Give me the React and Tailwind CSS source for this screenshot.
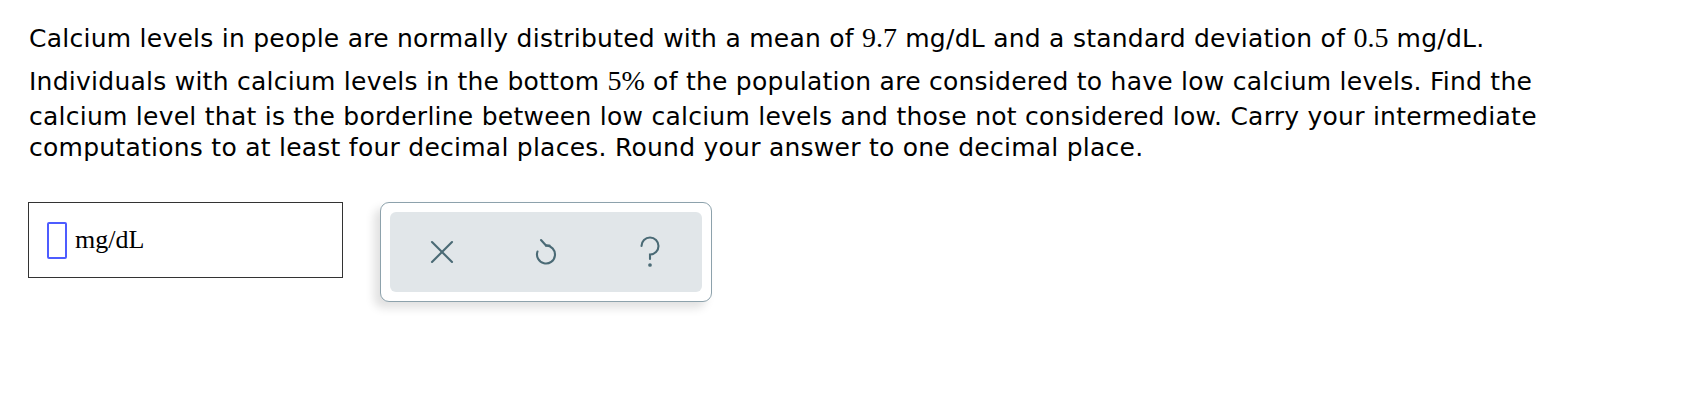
const sans = { fontFamily: '"DejaVu Sans", Verdana, sans-serif' };

function M({ children }) {
  // inline math numbers rendered in a serif face, like MathJax
  return (
    <span className="text-[28px] leading-[40px] tracking-normal font-['Liberation_Serif',serif]">{children}</span>
  );
}

function CloseIcon() {
  return (
    <svg width="24" height="24" viewBox="0 0 24 24" fill="none" stroke="currentColor" strokeWidth="2.1" strokeLinecap="round">
      <path d="M2 2 L22 22" />
      <path d="M22 2 L2 22" />
    </svg>
  );
}

function UndoIcon() {
  return (
    <svg width="24" height="30" viewBox="0 0 24 30" fill="none" stroke="currentColor" strokeWidth="2.1" strokeLinecap="round" strokeLinejoin="round">
      <path d="M12 8.5 A9 9 0 1 1 3.5 14.5" />
      <path d="M12 8.5 L7 3" />
      <path d="M12 8.5 L15.5 8.5" />
    </svg>
  );
}

function HelpIcon() {
  return (
    <svg width="24" height="32" viewBox="0 0 24 32" fill="none" stroke="currentColor" strokeWidth="2.1" strokeLinecap="round">
      <path d="M3.5 10 A8.5 8.5 0 1 1 12 18.5 L12 23" />
      <circle cx="12" cy="29" r="0.8" fill="currentColor" />
    </svg>
  );
}

export default function App() {
  return (
    <div className="w-[1684px] h-[404px] bg-white text-black pl-[29px] pt-[18px]" style={sans}>
      <p className="text-[25px] leading-[31px] tracking-[0.25px]">
        Calcium levels in people are normally distributed with a mean of <M>9.7</M> mg/dL and a standard deviation of <M>0.5</M> mg/dL.
      </p>
      <p className="text-[25px] leading-[31px] tracking-[0.25px] mt-[3px] w-[1560px]">
        Individuals with calcium levels in the bottom <M>5%</M> of the population are considered to have low calcium levels. Find the calcium level that is the borderline between low calcium levels and those not considered low. Carry your intermediate computations to at least four decimal places. Round your answer to one decimal place.
      </p>

      <div className="flex items-start gap-[37px] mt-[39px] -ml-[1px]">
        <div className="w-[315px] h-[76px] border-[1.5px] border-[#333] flex items-center pl-[18px] gap-[8px]">
          <div className="w-[20px] h-[37px] border-2 border-[#4d5cff] rounded-[2px]" />
          <span className="text-[26px] font-['Liberation_Serif',serif] pb-[2px]">mg/dL</span>
        </div>

        <div className="w-[332px] h-[100px] rounded-[9px] border-[1.5px] border-[#8da2ac] bg-white p-[9px] shadow-[-6px_6px_10px_rgba(0,0,0,0.12)]">
          <div className="h-full rounded-[6px] bg-[#e1e6e9] flex items-center text-[#4a6a75]">
            <div className="flex-1 flex justify-center"><CloseIcon /></div>
            <div className="flex-1 flex justify-center"><UndoIcon /></div>
            <div className="flex-1 flex justify-center"><HelpIcon /></div>
          </div>
        </div>
      </div>
    </div>
  );
}
